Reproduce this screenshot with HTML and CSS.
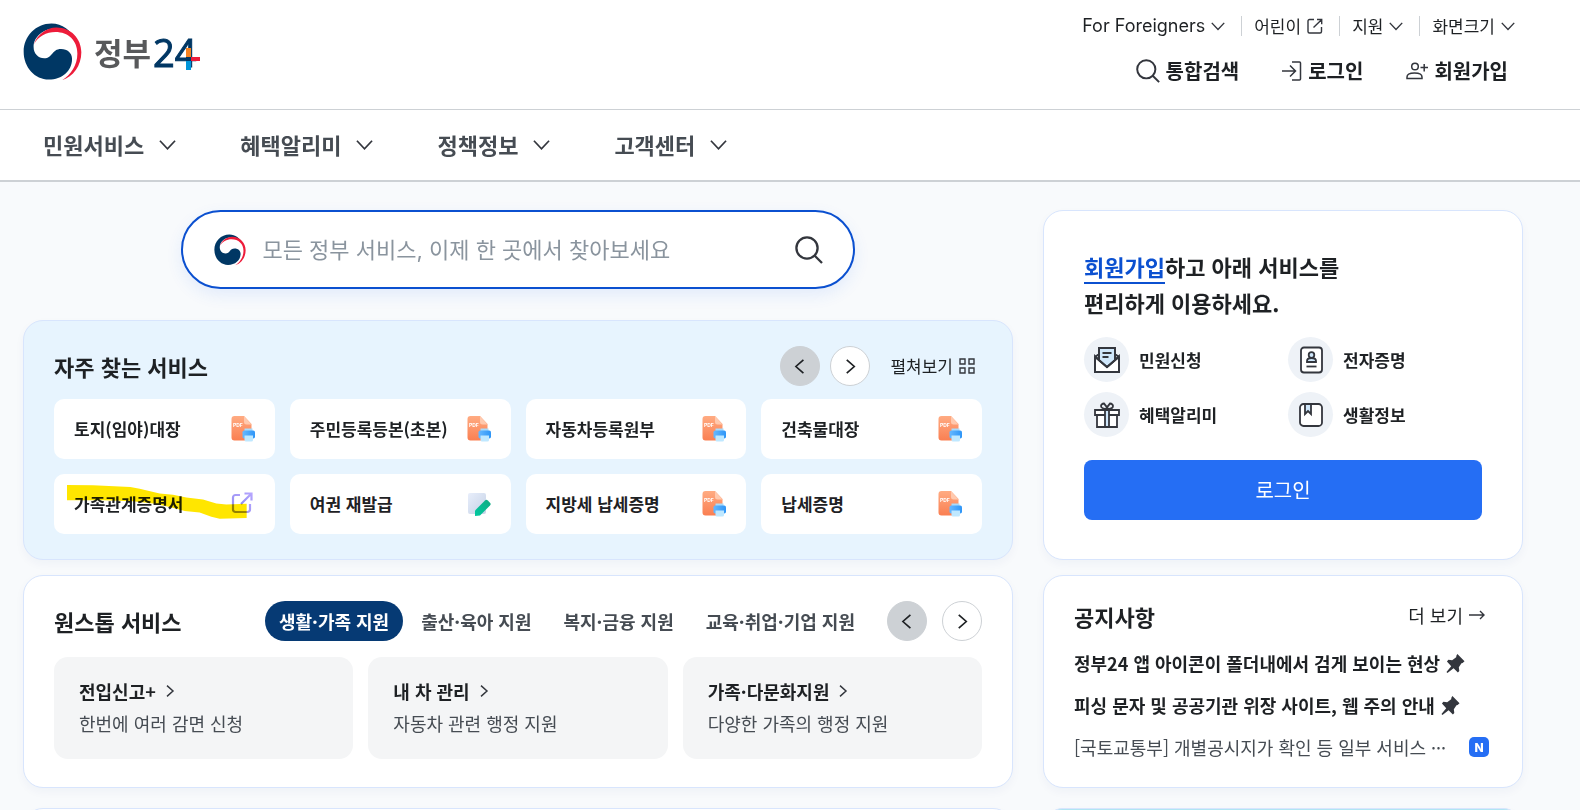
FILE: index.html
```html
<!DOCTYPE html>
<html lang="ko">
<head>
<meta charset="utf-8">
<meta name="viewport" content="width=device-width, initial-scale=1">
<title>정부24</title>
<link rel="stylesheet" href="styles.css">
</head>
<body>
<svg class="defs" aria-hidden="true">
  <defs>
    <linearGradient id="pdf-g" x1="0" y1="0" x2="0" y2="1"><stop offset="0" stop-color="#ffab82"/><stop offset="1" stop-color="#fa7f52"/></linearGradient>
    <linearGradient id="tray-g" x1="0" y1="0" x2="1" y2="0"><stop offset="0" stop-color="#66b8ff"/><stop offset="1" stop-color="#2d95f7"/></linearGradient>
    <linearGradient id="memo-g" x1="0" y1="0" x2="1" y2="1"><stop offset="0" stop-color="#e8eefb"/><stop offset="1" stop-color="#c5d2e6"/></linearGradient>
    <linearGradient id="pen-g" x1="0" y1="1" x2="1" y2="0"><stop offset="0" stop-color="#00c9a0"/><stop offset="1" stop-color="#12ab83"/></linearGradient>
    <linearGradient id="ext-g" x1="0" y1="1" x2="1" y2="0"><stop offset="0" stop-color="#8f8cf0"/><stop offset="1" stop-color="#b7a6ff"/></linearGradient>
  </defs>
  <symbol id="emblem" viewBox="14 16 178 174">
    <path fill="#003764" d="M174 70C160 38 132 17 100 17 53 17 16 55 16 102c0 47 34 84 76 84 40 0 70-26 70-62 0-18-14-30-33-30-29 0-25 28-51 28-18 0-32-14-32-34 0-33 32-56 66-56 30 0 53 16 62 38z"/>
    <path fill="#ed1c3a" d="M47 80C57 50 85 29 115 29c43 0 75 33 75 75 0 41-25 74-58 84 26-16 46-46 46-80 0-40-28-65-66-65-27 0-53 13-65 37z"/>
  </symbol>
  <symbol id="chev-down" viewBox="0 0 18 18"><path d="M1 5l8 8.500 8-8.500"/></symbol>
  <symbol id="chev-right" viewBox="0 0 18 18"><path d="M4.500 1l9 8-9 8"/></symbol>
  <symbol id="chev-left" viewBox="0 0 18 18"><path d="M12.500 1l-9 8 9 8"/></symbol>
  <symbol id="search" viewBox="0 0 28 28"><circle cx="12" cy="12" r="10.600"/><path d="M19.500 19.500L27 27"/></symbol>
  <symbol id="external" viewBox="0 0 16 16"><path d="M7 1.500H2.500A1.500 1.500 0 0 0 1 3v10.500A1.500 1.500 0 0 0 2.500 15H13a1.500 1.500 0 0 0 1.500-1.500V9M10 1.500h4.700v4.700M14.500 1.700L6.500 9.500"/></symbol>
  <symbol id="pdf" viewBox="0 0 24 26">
    <path fill="url(#pdf-g)" d="M3.500 0H13l7.500 8v14a2.500 2.500 0 0 1-2.500 2.500H3.500A3 3 0 0 1 .500 21.500V3a3 3 0 0 1 3-3z"/>
    <path fill="#ffc9ae" d="M13 0l7.500 8.500H15.500a2.500 2.500 0 0 1-2.500-2.500z"/>
    <path fill="#a9dbfb" d="M13.500 12.500h8v4h-8z"/>
    <rect x="11.500" y="14.500" width="12.500" height="8" rx="1.800" fill="url(#tray-g)"/>
    <path fill="#bfe8ff" d="M13.500 19.500h8.500v4.500a1.500 1.500 0 0 1-1.500 1.500H15a1.500 1.500 0 0 1-1.500-1.500z"/>
  </symbol>
</svg>
<div class="page">
  <header class="header">
    <a class="logo" href="#" aria-label="정부24 홈">
      <svg class="logo-emblem"><use href="#emblem"/></svg>
      <span class="logo-name">정부</span>
      <span class="logo-number">24<svg class="logo-cross" viewBox="0 0 14 22"><path fill="#f58220" d="M0 0h5v9H0z"/><path fill="#0095da" d="M0 13h5v9H0z"/><path fill="#003764" d="M0 9h5v4H0z"/><path fill="#ed1c3a" d="M5 9h9v4H5z"/></svg></span>
    </a>
    <div class="header-links">
      <ul class="utility">
        <li><button type="button" class="latin">For Foreigners<svg class="ico i14"><use href="#chev-down"/></svg></button></li>
        <li><a href="#">어린이<svg class="ico i16"><use href="#external"/></svg></a></li>
        <li><button type="button">지원<svg class="ico i14"><use href="#chev-down"/></svg></button></li>
        <li><button type="button">화면크기<svg class="ico i14"><use href="#chev-down"/></svg></button></li>
      </ul>
      <ul class="account">
        <li><a href="#"><svg class="ico i24 bold"><use href="#search"/></svg>통합검색</a></li>
        <li><a href="#"><svg class="ico i20" viewBox="0 0 20 20"><path d="M0 10h13M8 4.500l5.500 5.500L8 15.500M10 1h7.500a1 1 0 0 1 1 1v16a1 1 0 0 1-1 1H10"/></svg>로그인</a></li>
        <li><a href="#"><svg class="ico i22" viewBox="0 0 22 20"><circle cx="9" cy="5.500" r="3.300"/><path d="M1 17.500v-1.500c0-2.500 2.500-4 7.500-4s7.500 1.500 7.500 4v1.500zM14.500 6.500H22M18.200 3v7.500"/></svg>회원가입</a></li>
      </ul>
    </div>
  </header>
  <nav class="nav" aria-label="주 메뉴">
    <button type="button">민원서비스<svg class="ico i17"><use href="#chev-down"/></svg></button>
    <button type="button">혜택알리미<svg class="ico i17"><use href="#chev-down"/></svg></button>
    <button type="button">정책정보<svg class="ico i17"><use href="#chev-down"/></svg></button>
    <button type="button">고객센터<svg class="ico i17"><use href="#chev-down"/></svg></button>
  </nav>
  <main class="main">
    <div class="row">
      <div class="lead">
        <form class="search" role="search">
          <svg class="search-emblem"><use href="#emblem"/></svg>
          <input type="text" aria-label="통합검색" placeholder="모든 정부 서비스, 이제 한 곳에서 찾아보세요">
          <button type="button" aria-label="검색"><svg class="ico i28 bold"><use href="#search"/></svg></button>
        </form>
        <section class="card frequent">
          <div class="card-head">
            <h2>자주 찾는 서비스</h2>
            <div class="pager near">
              <button type="button" class="round off" aria-label="이전"><svg class="ico i15"><use href="#chev-left"/></svg></button>
              <button type="button" class="round" aria-label="다음"><svg class="ico i15"><use href="#chev-right"/></svg></button>
            </div>
            <button type="button" class="expand">펼쳐보기<svg class="ico i16" viewBox="0 0 16 16"><path d="M1 1h5v5H1zM10 1h5v5h-5zM1 10h5v5H1zM10 10h5v5h-5z"/></svg></button>
          </div>
          <div class="tiles">
            <a class="tile" href="#">토지(임야)대장<svg class="doc" viewBox="0 0 24 26"><use href="#pdf"/><text x="2" y="11" class="pdf-label">PDF</text></svg></a>
            <a class="tile" href="#">주민등록등본(초본)<svg class="doc" viewBox="0 0 24 26"><use href="#pdf"/><text x="2" y="11" class="pdf-label">PDF</text></svg></a>
            <a class="tile" href="#">자동차등록원부<svg class="doc" viewBox="0 0 24 26"><use href="#pdf"/><text x="2" y="11" class="pdf-label">PDF</text></svg></a>
            <a class="tile" href="#">건축물대장<svg class="doc" viewBox="0 0 24 26"><use href="#pdf"/><text x="2" y="11" class="pdf-label">PDF</text></svg></a>
            <a class="tile" href="#">가족관계증명서
              <svg class="doc" viewBox="0 0 24 26"><g fill="none" stroke="url(#ext-g)" stroke-width="2.200"><path d="M9 4H4.500A2.500 2.500 0 0 0 2 6.500v12A2.500 2.500 0 0 0 4.500 21h12a2.500 2.500 0 0 0 2.500-2.500V13"/><path d="M13.500 2.500h7v7M20 3L10 13"/></g></svg>
              <svg class="marker" viewBox="22 225 540 101" preserveAspectRatio="none"><path fill="#ffe600" d="M22 225l78 1 112 5 28 5 60 14 40 4 40 8 50 6 40 12 30 3 61-2v42l-81 2-25-6-35-12-45-5-45-12-50-10-60-7-90-3H22z"/></svg>
            </a>
            <a class="tile" href="#">여권 재발급<svg class="doc" viewBox="0 0 24 26"><rect x="1" y="2" width="18" height="21" rx="2" fill="url(#memo-g)"/><path fill="url(#pen-g)" d="M8 25v-5.500L18 9.500a2 2 0 0 1 2.800 0l2.200 2.200a2 2 0 0 1 0 2.800L13 24.500z"/></svg></a>
            <a class="tile" href="#">지방세 납세증명<svg class="doc" viewBox="0 0 24 26"><use href="#pdf"/><text x="2" y="11" class="pdf-label">PDF</text></svg></a>
            <a class="tile" href="#">납세증명<svg class="doc" viewBox="0 0 24 26"><use href="#pdf"/><text x="2" y="11" class="pdf-label">PDF</text></svg></a>
          </div>
        </section>
      </div>
      <section class="card login">
        <h2><a href="#">회원가입</a>하고 아래 서비스를<br>편리하게 이용하세요.</h2>
        <ul class="features">
          <li><span class="bubble"><svg viewBox="0 0 28 28"><path fill="#fff" d="M2 10v16h24V10l-12 11z"/><path fill="#cfe7fb" d="M6 2h16v12l-8 7-8-7z"/><path d="M6 8L2 11v15h24V11l-4-3M2 11l12 10 12-10M6 14V2h16v12M9.500 7h9M9.500 11h6"/></svg></span>민원신청</li>
          <li><span class="bubble"><svg viewBox="0 0 28 28"><rect x="4" y="1.500" width="21" height="25" rx="3" fill="#fff"/><circle cx="14.500" cy="9" r="2.800" fill="#cfe7fb"/><path fill="#cfe7fb" d="M10 16v-1c0-2 1.500-3 4.500-3s4.500 1 4.500 3v1z"/><path d="M9.500 20.500h10"/></svg></span>전자증명</li>
          <li><span class="bubble"><svg viewBox="0 0 28 28"><path fill="#fff" d="M2 9h24v5H2zM4 14h20v12H4z"/><path fill="#cfe7fb" d="M12 9h4v17h-4z"/><path d="M14 8c-3 0-6-1-6-3 0-1 1-2.500 3-2.500 1 1 3 3.500 3 5.500zM14 8c3 0 6-1 6-3 0-1-1-2.500-3-2.500-1 1-3 3.500-3 5.500z"/></svg></span>혜택알리미</li>
          <li><span class="bubble"><svg viewBox="0 0 28 28"><rect x="3" y="3" width="22" height="22" rx="3.500" fill="#fff"/><path fill="#cfe7fb" d="M8 3h6v10l-3-3-3 3z"/></svg></span>생활정보</li>
        </ul>
        <button type="button" class="primary">로그인</button>
      </section>
    </div>
    <div class="row">
      <section class="card onestop">
        <div class="card-head">
          <h2>원스톱 서비스</h2>
          <div class="tabs">
            <button type="button" class="tab on">생활·가족 지원</button>
            <button type="button" class="tab">출산·육아 지원</button>
            <button type="button" class="tab">복지·금융 지원</button>
            <button type="button" class="tab">교육·취업·기업 지원</button>
          </div>
          <div class="pager">
            <button type="button" class="round off" aria-label="이전"><svg class="ico i15"><use href="#chev-left"/></svg></button>
            <button type="button" class="round" aria-label="다음"><svg class="ico i15"><use href="#chev-right"/></svg></button>
          </div>
        </div>
        <div class="bundles">
          <a class="bundle" href="#"><strong>전입신고+<svg class="ico i12"><use href="#chev-right"/></svg></strong><span>한번에 여러 감면 신청</span></a>
          <a class="bundle" href="#"><strong>내 차 관리<svg class="ico i12"><use href="#chev-right"/></svg></strong><span>자동차 관련 행정 지원</span></a>
          <a class="bundle" href="#"><strong>가족·다문화지원<svg class="ico i12"><use href="#chev-right"/></svg></strong><span>다양한 가족의 행정 지원</span></a>
        </div>
      </section>
      <section class="card notices">
        <div class="notice-head">
          <h2>공지사항</h2>
          <a href="#">더 보기<svg class="ico i16" viewBox="0 0 16 16"><path d="M0 8h15M11 4l4 4-4 4"/></svg></a>
        </div>
        <ul>
          <li class="pinned"><a href="#">정부24 앱 아이콘이 폴더내에서 검게 보이는 현상</a><svg class="pin" viewBox="0 0 20 20"><path d="M12 0l7.500 7.500-2 2-1.200.300-2.800 4.200.500 4-1.500 1.500-4.500-4.500L1.500 20 .500 19l5-6-4.500-5L2.500 6l4 .500 4.200-3 .300-2z"/></svg></li>
          <li class="pinned"><a href="#">피싱 문자 및 공공기관 위장 사이트, 웹 주의 안내</a><svg class="pin" viewBox="0 0 20 20"><path d="M12 0l7.500 7.500-2 2-1.200.300-2.800 4.200.500 4-1.500 1.500-4.500-4.500L1.500 20 .500 19l5-6-4.500-5L2.500 6l4 .500 4.200-3 .300-2z"/></svg></li>
          <li><a href="#">[국토교통부] 개별공시지가 확인 등 일부 서비스 ···</a><span class="badge">N</span></li>
        </ul>
      </section>
    </div>
    <div class="row last">
      <section class="card"></section>
      <section class="card teal"></section>
    </div>
  </main>
</div>
</body>
</html>
```

FILE: styles.css
```css
* { box-sizing: border-box; }

body {
  margin: 0;
  background: #f8fafc;
  color: #1e2124;
  font-family: "Noto Sans CJK KR", "Noto Sans", sans-serif;
  font-size: 18px;
  line-height: 24px;
}

h2 { margin: 0; font-size: 22px; line-height: 36px; font-weight: 700; }
ul { margin: 0; padding: 0; list-style: none; }
a { color: inherit; text-decoration: none; }
button { margin: 0; padding: 0; border: 0; background: none; color: inherit; font: inherit; cursor: pointer; }

.defs { position: absolute; width: 0; height: 0; }
.page { height: 100vh; overflow: hidden; display: flex; flex-direction: column; }

.ico { flex: none; fill: none; stroke: #33363d; stroke-width: 1.8; }
.ico.bold { stroke-width: 2.3; }
.i12 { width: 12px; height: 12px; }
.i14 { width: 14px; height: 14px; }
.i15 { width: 15px; height: 15px; }
.i16 { width: 16px; height: 16px; stroke-width: 1.4; }
.i17 { width: 17px; height: 17px; }
.i20 { width: 20px; height: 20px; stroke-width: 1.5; }
.i22 { width: 22px; height: 20px; stroke-width: 1.5; }
.i24 { width: 24px; height: 24px; }
.i28 { width: 28px; height: 28px; }

/* Header */
.header {
  flex: none;
  display: flex;
  justify-content: space-between;
  padding: 14px 65px 19px 23px;
  background: #fff;
  border-bottom: 1px solid #cdd1d5;
}
.logo { display: flex; align-items: center; height: 76px; }
.logo-emblem { width: 59px; height: 58px; margin-right: 12px; }
.logo-name { color: #58595b; font-size: 31px; line-height: 40px; font-weight: 700; }
.logo-number { position: relative; padding-left: 2px; color: #003764; font: 400 38px/40px "Open Sans", sans-serif; -webkit-text-stroke: 1px #003764; }
.logo-cross { position: absolute; left: 35px; top: 16px; width: 14px; height: 22px; }
.header-links { display: flex; flex-direction: column; align-items: flex-end; gap: 21px; }
.utility, .account { display: flex; align-items: center; }
.utility { font-size: 17px; }
.utility .latin { font-family: "Inter", sans-serif; font-size: 18px; }
.utility li { display: flex; align-items: center; }
.utility li + li::before { content: ""; width: 1px; height: 20px; margin: 0 12px 0 16px; background: #cdd1d5; }
.utility a, .utility button { display: flex; align-items: center; gap: 6px; }
.account { gap: 43px; padding-right: 7px; font-size: 20px; font-weight: 700; }
.account a { display: flex; align-items: center; gap: 6px; }

/* Main menu */
.nav {
  flex: none;
  display: flex;
  align-items: center;
  gap: 64px;
  height: 72px;
  padding: 0 43px 2px;
  background: #fff;
  border-bottom: 2px solid #cdd1d5;
  color: #464c53;
  font-size: 22px;
  font-weight: 700;
}
.nav button { display: flex; align-items: center; gap: 15px; }

/* Content */
.main { padding: 28px 57px 0 23px; }
.row { display: grid; grid-template-columns: minmax(0, 33fr) minmax(0, 16fr); column-gap: 30px; margin-bottom: 15px; }
.row.last { margin-top: 20px; }
.row.last .card { height: 200px; }
.card {
  background: #fff;
  border: 1px solid #d8e5fd;
  border-radius: 20px;
  box-shadow: 0 4px 10px rgba(30, 60, 120, 0.04);
}
.card.teal { background: #b1e5f3; }
.lead { display: flex; flex-direction: column; gap: 31px; }

.search {
  align-self: center;
  display: flex;
  align-items: center;
  width: 68%;
  height: 79px;
  padding: 0 30px 0 31px;
  background: #fff;
  border: 2px solid #0b50d0;
  border-radius: 40px;
  box-shadow: 0 6px 16px rgba(37, 110, 244, 0.1);
}
.search-emblem { flex: none; width: 32px; height: 32px; margin-right: 16px; }
.search input {
  flex: 1;
  min-width: 0;
  padding: 0;
  border: 0;
  outline: 0;
  background: none;
  font: 400 22px/36px "Inter", "Noto Sans CJK KR", sans-serif;
}
.search input::placeholder { color: #8a949e; opacity: 1; }
.search button { display: flex; }

.card-head { display: flex; align-items: center; height: 40px; }
.pager { display: flex; gap: 15px; }
.pager.near { gap: 10px; margin-left: auto; }
.round {
  display: flex;
  align-items: center;
  justify-content: center;
  width: 40px;
  height: 40px;
  border: 1px solid #cdd1d5;
  border-radius: 50%;
  background: #fff;
}
.round.off { background: #cdd1d5; }
.round .ico { stroke-width: 2; stroke: #1e2124; }

.frequent { padding: 25px 30px; background: #e7f4fe; }
.expand { display: flex; align-items: center; gap: 6px; margin: 0 7px 0 20px; font-size: 17px; }
.tiles { display: grid; grid-template-columns: repeat(4, minmax(0, 1fr)); gap: 15px; margin-top: 13px; }
.tile {
  position: relative;
  display: flex;
  align-items: center;
  justify-content: space-between;
  height: 60px;
  padding: 0 20px;
  border-radius: 10px;
  background: #fff;
  font-size: 17px;
  font-weight: 700;
  white-space: nowrap;
}
.doc { flex: none; width: 24px; height: 26px; }
.pdf-label { fill: #fff; font: 700 5px "Inter", sans-serif; }
.marker { position: absolute; left: 13px; top: 11px; width: 180px; height: 34px; mix-blend-mode: multiply; }

.login { padding: 37px 40px 39px; }
.login h2 a { border-bottom: 2px solid #0b50d0; color: #0b50d0; }
.features { display: grid; grid-template-columns: 1fr 1fr; gap: 10px; margin: 17px 0 23px; font-size: 17px; font-weight: 700; }
.features li { display: flex; align-items: center; gap: 10px; }
.bubble { display: flex; align-items: center; justify-content: center; width: 45px; height: 45px; border-radius: 50%; background: #eef2f7; }
.bubble svg { width: 28px; height: 28px; fill: none; stroke: #33363d; stroke-width: 1.8; }
.primary { width: 100%; height: 60px; border-radius: 8px; background: #256ef4; color: #fff; font-size: 20px; }

.onestop { padding: 25px 30px 28px; }
.onestop .card-head { justify-content: space-between; }
.tabs { display: flex; gap: 4px; margin-left: auto; margin-right: 18px; font-size: 18px; font-weight: 700; color: #464c53; }
.tab { height: 40px; padding: 0 14px; border-radius: 20px; white-space: nowrap; }
.tab.on { background: #063a74; color: #fff; }
.bundles { display: grid; grid-template-columns: repeat(3, minmax(0, 1fr)); gap: 15px; margin-top: 16px; }
.bundle { display: flex; flex-direction: column; padding: 18px 25px 20px; border-radius: 14px; background: #f4f5f6; line-height: 32px; }
.bundle strong { display: flex; align-items: center; gap: 8px; }
.bundle .ico { stroke-width: 2.2; }
.bundle span { color: #464c53; }

.notices { padding: 22px 30px 19px; }
.notice-head { display: flex; align-items: center; justify-content: space-between; margin-bottom: 8px; }
.notice-head a { display: flex; align-items: center; gap: 6px; margin-right: 7px; padding-bottom: 2px; }
.notices li { display: flex; align-items: center; height: 42px; color: #464c53; white-space: nowrap; }
.notices .pinned { gap: 6px; color: #1e2124; font-weight: 700; }
.pin { width: 19px; height: 19px; fill: #33363d; }
.badge {
  display: flex;
  align-items: center;
  justify-content: center;
  width: 20px;
  height: 20px;
  margin-left: auto;
  margin-right: 3px;
  border-radius: 5px;
  background: #256ef4;
  color: #fff;
  font: 800 12px "Inter", sans-serif;
}
```
